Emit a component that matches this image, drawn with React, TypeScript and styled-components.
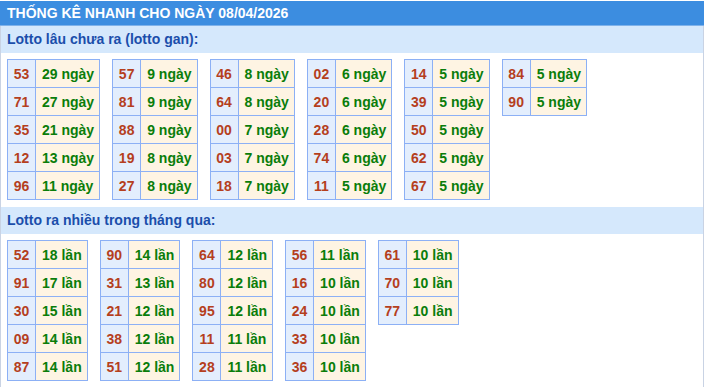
import React from 'react';
import styled, { createGlobalStyle } from 'styled-components';

const GlobalStyle = createGlobalStyle`
  body {
    margin: 0;
    background: #ffffff;
    font-family: 'Liberation Sans', Arial, sans-serif;
  }
`;

type Entry = [string, number];

const ganTables: Entry[][] = [
  [['53', 29], ['71', 27], ['35', 21], ['12', 13], ['96', 11]],
  [['57', 9], ['81', 9], ['88', 9], ['19', 8], ['27', 8]],
  [['46', 8], ['64', 8], ['00', 7], ['03', 7], ['18', 7]],
  [['02', 6], ['20', 6], ['28', 6], ['74', 6], ['11', 5]],
  [['14', 5], ['39', 5], ['50', 5], ['62', 5], ['67', 5]],
  [['84', 5], ['90', 5]],
];

const hotTables: Entry[][] = [
  [['52', 18], ['91', 17], ['30', 15], ['09', 14], ['87', 14]],
  [['90', 14], ['31', 13], ['21', 12], ['38', 12], ['51', 12]],
  [['64', 12], ['80', 12], ['95', 12], ['11', 11], ['28', 11]],
  [['56', 11], ['16', 10], ['24', 10], ['33', 10], ['36', 10]],
  [['61', 10], ['70', 10], ['77', 10]],
];

const Page = styled.div`
  width: 704px;
  box-sizing: border-box;
  padding-top: 1px;
`;

const Header = styled.div`
  height: 24px;
  background: #3c8de0;
  color: #ffffff;
  font-size: 14px;
  font-weight: bold;
  line-height: 24px;
  padding-left: 7px;
  border-bottom: 1px solid #7fb2ea;
`;

const Body = styled.div`
  border-left: 1px solid #c9d3e4;
  border-right: 1px solid #c9d3e4;
`;

const SectionTitle = styled.div`
  height: 27px;
  background: #d5e8fc;
  color: #1b4eab;
  font-size: 14px;
  font-weight: bold;
  line-height: 27px;
  padding-left: 6px;
`;

const TableRow = styled.div<{ $bottom: number }>`
  display: flex;
  flex-wrap: wrap;
  align-items: flex-start;
  gap: 12px;
  padding: 6px 6px ${(p) => p.$bottom}px;
`;

const Table = styled.table`
  border-collapse: collapse;
  font-size: 14px;
  font-weight: bold;
`;

const NumCell = styled.td`
  width: 27px;
  height: 27px;
  padding: 0;
  text-align: center;
  background: #e3eefd;
  color: #b53f1d;
  border: 1px solid #8cb0f5;
`;

const ValCell = styled.td`
  height: 27px;
  padding: 0 5px 0 6px;
  background: #fef4e3;
  color: #0a7d0a;
  border: 1px solid #8cb0f5;
  white-space: nowrap;
`;

const Section = ({ title, tables, unit, bottom }: { title: string; tables: Entry[][]; unit: string; bottom: number }) => (
  <>
    <SectionTitle>{title}</SectionTitle>
    <TableRow $bottom={bottom}>
      {tables.map((t, i) => (
        <Table key={i}>
          <tbody>
            {t.map(([n, v]) => (
              <tr key={n}>
                <NumCell>{n}</NumCell>
                <ValCell>
                  {v} {unit}
                </ValCell>
              </tr>
            ))}
          </tbody>
        </Table>
      ))}
    </TableRow>
  </>
);

export default function App() {
  return (
    <Page>
      <GlobalStyle />
      <Header>THỐNG KÊ NHANH CHO NGÀY 08/04/2026</Header>
      <Body>
        <Section title="Lotto lâu chưa ra (lotto gan):" tables={ganTables} unit="ngày" bottom={7} />
        <Section title="Lotto ra nhiều trong tháng qua:" tables={hotTables} unit="lần" bottom={9} />
      </Body>
    </Page>
  );
}
